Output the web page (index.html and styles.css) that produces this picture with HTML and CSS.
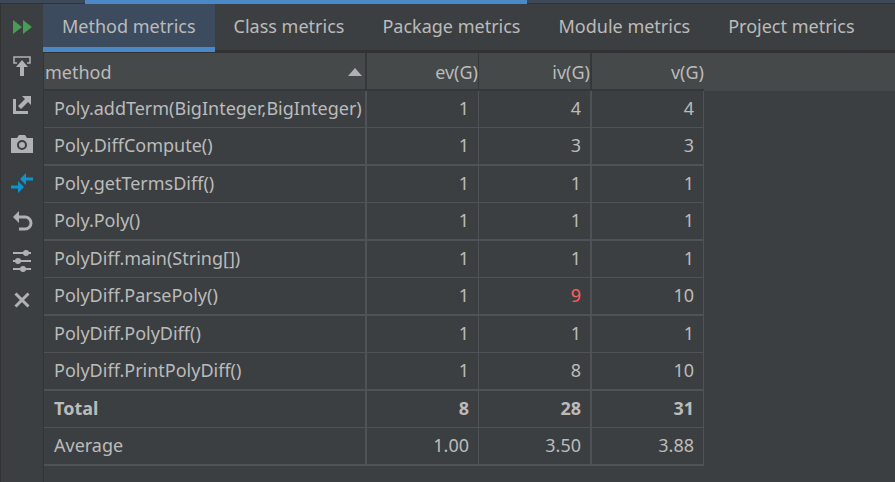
FILE: index.html
```
<!DOCTYPE html>
<html lang="en">
  <head>
    <meta charset="utf-8">
    <meta name="viewport" content="width=device-width,initial-scale=1.0">
    <title>Method metrics</title>
    <link rel="stylesheet" href="styles.css">
  </head>
  <body>
    <div class="top-strip">
      <div class="top-active"></div>
    </div>
    <div class="panel">
      <nav class="toolbar" aria-label="Metrics actions">
        <button type="button" aria-label="Rerun">
          <svg viewBox="0 0 24 24"><path fill="#499c54" d="M3 5l9 7-9 7zM13 5l9 7-9 7z"/></svg>
        </button>
        <button type="button" aria-label="Export">
          <svg viewBox="0 0 24 24"><path fill="none" stroke="#afb1b3" stroke-width="1.500" d="M7 9H4V3h16v6h-3"/><path fill="#afb1b3" d="M12 6l6 7h-4v9h-4v-9H6z"/></svg>
        </button>
        <button type="button" aria-label="Open in new window">
          <svg viewBox="0 0 24 24"><path fill="#afb1b3" d="M3 6h3v12h12v3H3zM12 3h9v9l-3-3-7 7-3-3 7-7z"/></svg>
        </button>
        <button type="button" aria-label="Snapshot">
          <svg viewBox="0 0 24 24"><path fill="#afb1b3" fill-rule="evenodd" d="M1 6h6l2-3h6l2 3h6v15H1zM12 8a5 5 0 1 0 0 10a5 5 0 1 0 0-10zM12 10a3 3 0 1 1 0 6a3 3 0 1 1 0-6z"/></svg>
        </button>
        <button type="button" aria-label="Compare">
          <svg viewBox="0 0 24 24"><path fill="#0e93cc" d="M10 8l6-6v4.500h7v3h-7V14zM14 16l-6 6v-4.500H1v-3h7V10z"/></svg>
        </button>
        <button type="button" aria-label="Undo">
          <svg viewBox="0 0 24 24"><path fill="#afb1b3" d="M3 7l6-6v12z"/><path fill="none" stroke="#afb1b3" stroke-width="3" d="M8 7h7a6 6 0 0 1 0 12H9"/></svg>
        </button>
        <button type="button" aria-label="Settings">
          <svg viewBox="0 0 24 24"><path fill="none" stroke="#afb1b3" stroke-width="2" d="M3 4h18M3 12h18M3 20h18"/><g fill="#afb1b3"><circle cx="16" cy="4" r="3"/><circle cx="8" cy="12" r="3"/><circle cx="13" cy="20" r="3"/></g></svg>
        </button>
        <button type="button" aria-label="Close">
          <svg viewBox="0 0 24 24"><path fill="none" stroke="#afb1b3" stroke-width="3" d="M5.500 5.500l13 13M18.500 5.500l-13 13"/></svg>
        </button>
      </nav>
      <main class="content">
        <div class="tabs" role="tablist">
          <button type="button" role="tab" aria-selected="true" class="active">Method metrics</button>
          <button type="button" role="tab">Class metrics</button>
          <button type="button" role="tab">Package metrics</button>
          <button type="button" role="tab">Module metrics</button>
          <button type="button" role="tab">Project metrics</button>
        </div>
        <div class="table-area">
          <table>
            <colgroup>
              <col class="col-method">
              <col class="col-ev">
              <col class="col-iv">
              <col class="col-v">
            </colgroup>
            <thead>
              <tr>
                <th aria-sort="ascending"><div class="sorted">method <svg class="arrow" viewBox="0 0 14 8"><path fill="#afb1b3" d="M7 0l7 8H0z"/></svg></div></th>
                <th>ev(G)</th>
                <th>iv(G)</th>
                <th>v(G)</th>
              </tr>
            </thead>
            <tbody>
              <tr><td>Poly.addTerm(BigInteger,BigInteger)</td><td>1</td><td>4</td><td>4</td></tr>
              <tr><td>Poly.DiffCompute()</td><td>1</td><td>3</td><td>3</td></tr>
              <tr><td>Poly.getTermsDiff()</td><td>1</td><td>1</td><td>1</td></tr>
              <tr><td>Poly.Poly()</td><td>1</td><td>1</td><td>1</td></tr>
              <tr><td>PolyDiff.main(String[])</td><td>1</td><td>1</td><td>1</td></tr>
              <tr><td>PolyDiff.ParsePoly()</td><td>1</td><td class="over">9</td><td>10</td></tr>
              <tr><td>PolyDiff.PolyDiff()</td><td>1</td><td>1</td><td>1</td></tr>
              <tr><td>PolyDiff.PrintPolyDiff()</td><td>1</td><td>8</td><td>10</td></tr>
              <tr class="total"><td>Total</td><td>8</td><td>28</td><td>31</td></tr>
              <tr><td>Average</td><td>1.00</td><td>3.50</td><td>3.88</td></tr>
            </tbody>
          </table>
        </div>
      </main>
    </div>
  </body>
</html>
```
FILE: styles.css
```
* {
    box-sizing: border-box;
}
body {
    margin: 0;
    min-height: 100vh;
    display: flex;
    flex-direction: column;
    background-color: #3c3f41;
    color: #bbbbbb;
    font-family: "Noto Sans", "Open Sans", sans-serif;
    font-size: 18px;
    line-height: 24px;
}
button {
    border: 0;
    padding: 0;
    background: none;
    color: inherit;
    font: inherit;
}
.top-strip {
    height: 4px;
    padding-left: 85px;
    background-color: #3d4859;
    border-bottom: 1px solid #323232;
}
.top-active {
    width: 442px;
    max-width: 100%;
    height: 4px;
    background-color: #4a88c7;
}
.panel {
    flex: 1;
    display: flex;
    border-left: 1px solid #323232;
}
.toolbar {
    flex: none;
    display: flex;
    flex-direction: column;
    width: 43px;
    padding-top: 3px;
    border-right: 1px solid #323537;
}
.toolbar button {
    display: flex;
    justify-content: center;
    align-items: center;
    height: 39px;
}
.toolbar svg {
    width: 24px;
    height: 24px;
}
.content {
    flex: 1;
    min-width: 0;
}
.tabs {
    display: flex;
    height: 49px;
    margin-left: -1px;
    border-bottom: 3px solid #323232;
}
.tabs button {
    height: 48px;
    padding: 0 19px 4px;
    white-space: nowrap;
}
.tabs .active {
    background-color: #3d4b5f;
    border-bottom: 5px solid #4a88c7;
    padding-bottom: 0;
}
.table-area {
    background: linear-gradient(#45494a, #45494a) top / 100% 38px no-repeat;
}
table {
    width: 660px;
    table-layout: fixed;
    border-collapse: separate;
    border-spacing: 0;
}
.col-method {
    width: 323px;
}
.col-ev,
.col-v {
    width: 112px;
}
.col-iv {
    width: 113px;
}
th {
    height: 38px;
    padding: 2px 0 0;
    border-right: 1px solid #35383a;
    border-bottom: 2px solid #35383a;
    font-weight: normal;
    text-align: right;
}
th:first-child {
    padding-left: 1px;
    text-align: left;
}
th:last-child {
    border-right: 0;
}
.sorted {
    display: flex;
    align-items: center;
    justify-content: space-between;
    padding-right: 3px;
}
.arrow {
    width: 14px;
    height: 8px;
}
td {
    height: 37px;
    padding: 0 9px 2px 0;
    border-right: 1px solid #505355;
    border-bottom: 1px solid #505355;
    text-align: right;
    white-space: nowrap;
    overflow: hidden;
}
td:first-child {
    padding-left: 10px;
    padding-right: 0;
    text-align: left;
}
th:nth-child(odd):not(:last-child),
td:nth-child(odd) {
    border-right-width: 2px;
}
tr:nth-child(even) td {
    height: 38px;
    border-bottom-width: 2px;
}
.over {
    color: #ff5f5f;
}
.total {
    font-weight: bold;
}
```
